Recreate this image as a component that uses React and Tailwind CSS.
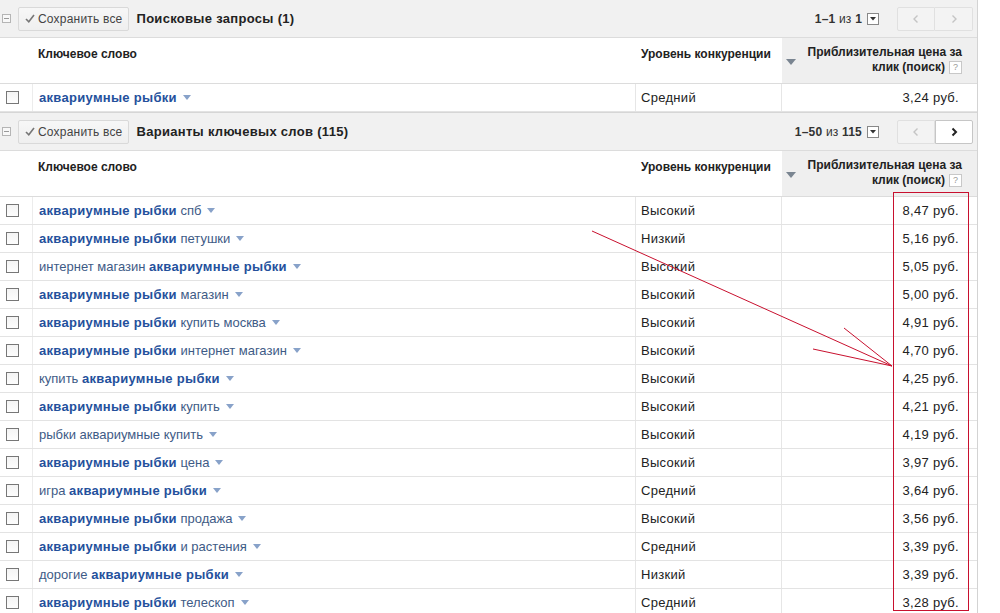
const KW = "аквариумные рыбки";

const rows = [
  { pre: "", bold: KW, post: " спб", level: "Высокий", price: "8,47" },
  { pre: "", bold: KW, post: " петушки", level: "Низкий", price: "5,16" },
  { pre: "интернет магазин ", bold: KW, post: "", level: "Высокий", price: "5,05" },
  { pre: "", bold: KW, post: " магазин", level: "Высокий", price: "5,00" },
  { pre: "", bold: KW, post: " купить москва", level: "Высокий", price: "4,91" },
  { pre: "", bold: KW, post: " интернет магазин", level: "Высокий", price: "4,70" },
  { pre: "купить ", bold: KW, post: "", level: "Высокий", price: "4,25" },
  { pre: "", bold: KW, post: " купить", level: "Высокий", price: "4,21" },
  { pre: "рыбки аквариумные купить", bold: "", post: "", level: "Высокий", price: "4,19" },
  { pre: "", bold: KW, post: " цена", level: "Высокий", price: "3,97" },
  { pre: "игра ", bold: KW, post: "", level: "Средний", price: "3,64" },
  { pre: "", bold: KW, post: " продажа", level: "Высокий", price: "3,56" },
  { pre: "", bold: KW, post: " и растения", level: "Средний", price: "3,39" },
  { pre: "дорогие ", bold: KW, post: "", level: "Низкий", price: "3,39" },
  { pre: "", bold: KW, post: " телескоп", level: "Средний", price: "3,28" },
];

function Chevron({ dir, active }) {
  return (
    <svg width="8" height="10" viewBox="0 0 8 10" className="block">
      <path
        d={dir === "left" ? "M5.5 1.5 L2 5 L5.5 8.5" : "M2.5 1.5 L6 5 L2.5 8.5"}
        fill="none"
        stroke={active ? "#222" : "#c4c4c4"}
        strokeWidth={active ? 2 : 1.4}
      />
    </svg>
  );
}

function Toolbar({ title, range, total, nextActive, top }) {
  return (
    <div className={`flex items-center h-[38px] bg-[#f1f1f1] border-b border-[#dcdcdc] ${top ? "border-t border-t-[#d6d6d6] h-[39px]" : ""}`}>
      <div className="w-[18px] flex justify-start pl-[2px]">
        <div className="w-[9px] h-[9px] border border-[#b5b5b5] bg-[#f8f8f8] flex items-center justify-center">
          <div className="w-[5px] h-px bg-[#9a9a9a]" />
        </div>
      </div>
      <div className="h-[24px] px-[6px] flex items-center gap-[3px] border border-[#d9d9d9] rounded-[2px] bg-gradient-to-b from-[#f7f7f7] to-[#efefef] text-[12px] text-[#444] tracking-[0.2px]">
        <svg width="10" height="9" viewBox="0 0 10 9">
          <path d="M1 5 L3.8 7.8 L9 1" fill="none" stroke="#777" strokeWidth="1.6" />
        </svg>
        <span>Сохранить все</span>
      </div>
      <div className="ml-[7px] text-[13px] font-bold text-[#222] tracking-[0.3px]">{title}</div>
      <div className="ml-auto flex items-center text-[12px] text-[#333]">
        <span className="tracking-[0.2px]">
          <b>{range}</b> из <b>{total}</b>
        </span>
        <div className="ml-[5px] w-[12px] h-[12px] border border-[#888] bg-white flex items-center justify-center">
          <svg width="6" height="4" viewBox="0 0 6 4">
            <path d="M0 0 H6 L3 3.5 Z" fill="#333" />
          </svg>
        </div>
        <div className="ml-[18px] mr-[4px] flex">
          <div className="w-[38px] h-[24px] border border-[#e0e0e0] bg-[#f3f3f3] rounded-l-[2px] flex items-center justify-center">
            <Chevron dir="left" />
          </div>
          <div
            className={`w-[38px] h-[24px] border rounded-r-[2px] flex items-center justify-center ${
              nextActive ? "bg-white border-[#c6c6c6]" : "bg-[#f3f3f3] border-[#e0e0e0] border-l-0"
            }`}
          >
            <Chevron dir="right" active={nextActive} />
          </div>
        </div>
      </div>
    </div>
  );
}

function Header() {
  return (
    <div className="flex h-[46px] border-b border-[#dcdcdc] bg-white text-[12px] font-bold text-[#222]">
      <div className="w-[33px]" />
      <div className="w-[603px] pl-[5px] pt-[7px]">Ключевое слово</div>
      <div className="w-[146px] pl-[5px] pt-[7px]">Уровень конкуренции</div>
      <div className="flex-1 bg-[#efefef] flex pt-[7px] pr-[15px]">
        <svg width="10" height="6" viewBox="0 0 10 6" className="ml-[4px] mt-[14px]">
          <path d="M0 0 H10 L5 6 Z" fill="#7a8591" />
        </svg>
        <div className="ml-auto text-right leading-[15px]">
          <div>Приблизительная цена за</div>
          <div className="flex items-center justify-end gap-[4px]">
            клик (поиск)
            <span className="w-[13px] h-[13px] border border-[#c8c8c8] bg-white text-[9px] font-normal text-[#999] flex items-center justify-center leading-none">
              ?
            </span>
          </div>
        </div>
      </div>
    </div>
  );
}

function Row({ r }) {
  return (
    <div className="flex h-[28px] border-b border-[#e3e3e3] bg-white text-[13px]">
      <div className="w-[33px] border-r border-[#ececec] flex items-center pl-[6px]">
        <div className="w-[13px] h-[13px] border border-[#777] bg-gradient-to-b from-[#f4f4f4] to-[#fdfdfd]" />
      </div>
      <div className="w-[603px] border-r border-[#e6e6e6] flex items-center pl-[6px] text-[#3e5b86]">
        <span className="whitespace-pre">
          {r.pre}
          {r.bold && <span className="font-bold text-[#24509c] tracking-[0.3px]">{r.bold}</span>}
          {r.post}
        </span>
        <svg width="8" height="5" viewBox="0 0 8 5" className="ml-[6px]">
          <path d="M0 0 H8 L4 5 Z" fill="#88a2c9" />
        </svg>
      </div>
      <div className="w-[146px] border-r border-[#e6e6e6] flex items-center pl-[5px] text-[#222] tracking-[0.3px]">{r.level}</div>
      <div className="flex-1 flex items-center justify-end pr-[18px] text-[#222] tracking-[0.3px]">{r.price} руб.</div>
    </div>
  );
}

export default function App() {
  return (
    <div
      className="relative w-[1000px] h-[613px] overflow-hidden bg-white"
      style={{ fontFamily: '"Liberation Sans", Arial, sans-serif' }}
    >
      <div className="w-[978px] border-r border-[#d3d3d3]">
        <Toolbar title="Поисковые запросы (1)" range="1–1" total="1" />
        <Header />
        <Row r={{ pre: "", bold: KW, post: "", level: "Средний", price: "3,24" }} />
        <Toolbar title="Варианты ключевых слов (115)" range="1–50" total="115" nextActive top />
        <Header />
        {rows.map((r, i) => (
          <Row key={i} r={r} />
        ))}
      </div>

      {/* red annotation */}
      <svg className="absolute inset-0 pointer-events-none" width="1000" height="613">
        <rect x="893.5" y="192.5" width="75" height="418" fill="none" stroke="#c8102e" strokeWidth="1" />
        <line x1="592" y1="231" x2="892" y2="366" stroke="#c8102e" strokeWidth="1" />
        <line x1="844" y1="328" x2="892" y2="366" stroke="#c8102e" strokeWidth="1" />
        <line x1="813" y1="349" x2="892" y2="366" stroke="#c8102e" strokeWidth="1" />
      </svg>
    </div>
  );
}
